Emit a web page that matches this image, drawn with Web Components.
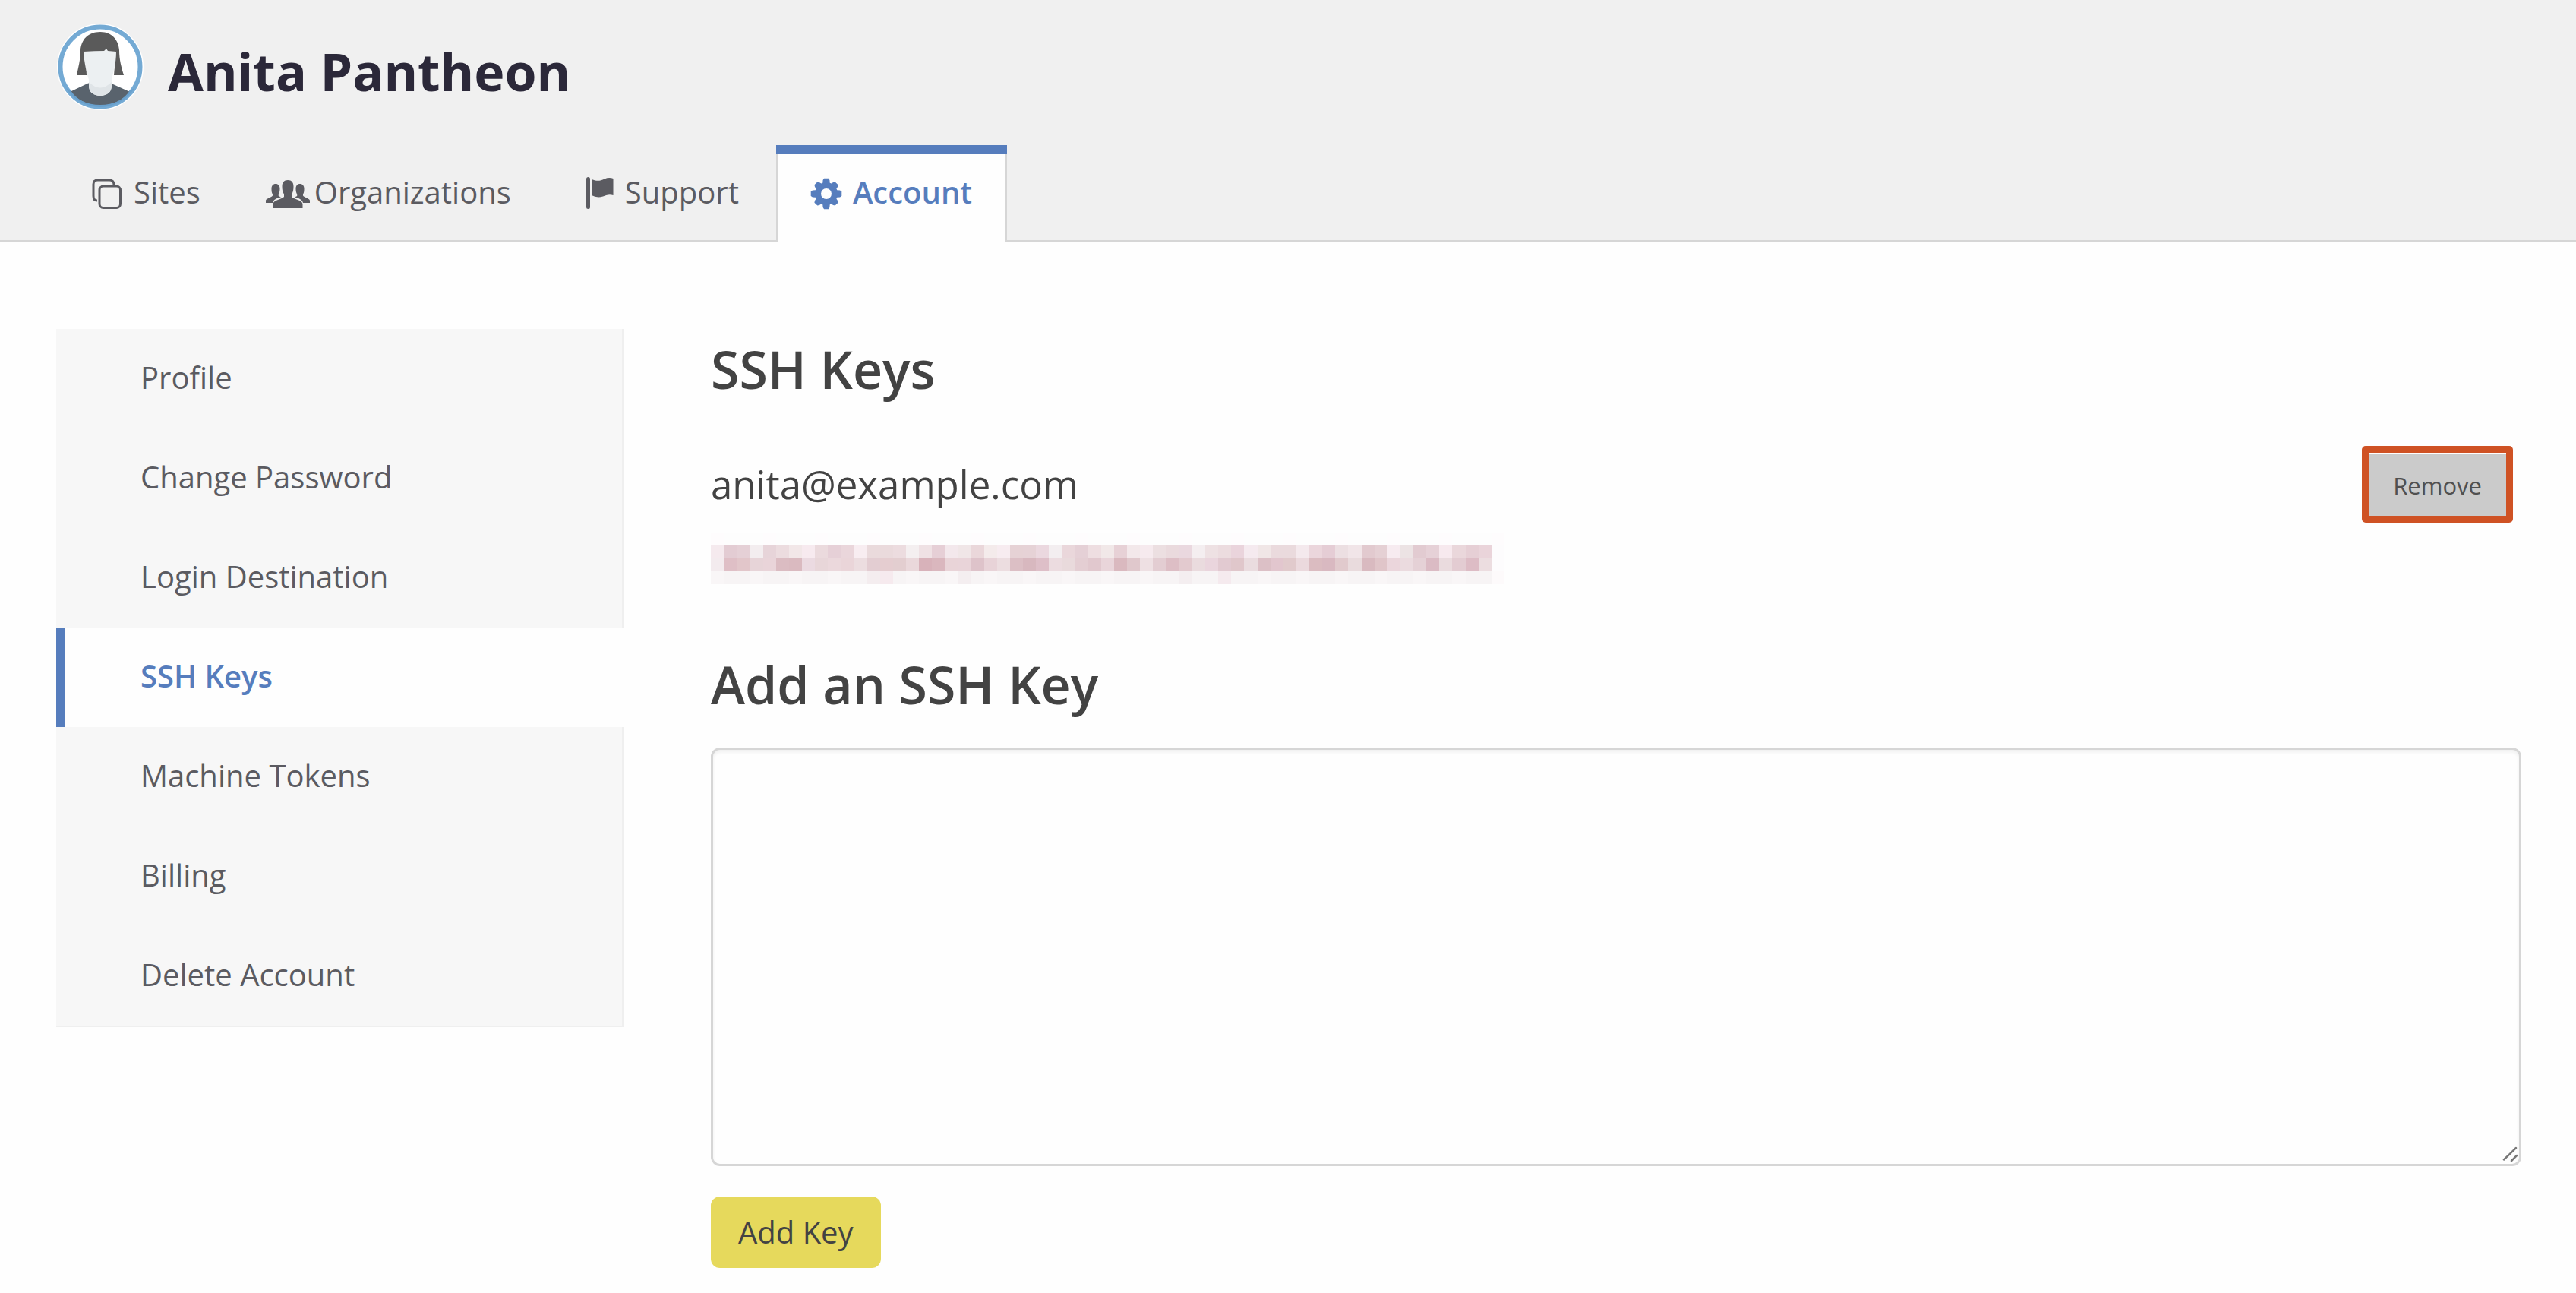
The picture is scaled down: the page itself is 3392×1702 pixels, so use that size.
<!DOCTYPE html>
<html lang="en">
<head>
<meta charset="utf-8">
<title>Account - SSH Keys</title>
<style>
  body { margin: 0; background: #fefefe; color: #434343; font-family: "Open Sans", "Noto Sans", sans-serif; }
</style>
</head>
<body>
<account-page></account-page>

<template id="t-account-page">
  <style>
    :host { display: block; }
    .columns { display: flex; align-items: flex-start; gap: 114px; padding: 114px 72px 32px 74px; }
    side-nav { flex: 0 0 748px; }
    main { flex: 1; min-width: 0; }
    h1 { margin: 0 0 48px; font-size: 68px; line-height: 106px; font-weight: 600; }
    add-key-form { margin-top: 79px; }
  </style>
  <account-header name="Anita Pantheon">
    <nav-tab icon="sites">Sites</nav-tab>
    <nav-tab icon="organizations">Organizations</nav-tab>
    <nav-tab icon="support">Support</nav-tab>
    <nav-tab icon="account" active>Account</nav-tab>
  </account-header>
  <div class="columns">
    <side-nav>
      <side-link>Profile</side-link>
      <side-link>Change Password</side-link>
      <side-link>Login Destination</side-link>
      <side-link active>SSH Keys</side-link>
      <side-link>Machine Tokens</side-link>
      <side-link>Billing</side-link>
      <side-link>Delete Account</side-link>
    </side-nav>
    <main>
      <h1>SSH Keys</h1>
      <ssh-key>anita@example.com</ssh-key>
      <add-key-form></add-key-form>
    </main>
  </div>
</template>

<template id="t-account-header">
  <style>
    :host { display: block; background: #f0f0f0; border-bottom: 3px solid #d6d6d6; padding: 31px 75px 0; }
    .user { display: flex; align-items: center; gap: 32px; }
    .name { padding-top: 12px; font-size: 68px; line-height: 92px; font-weight: 700; color: #2b2839; }
    nav { display: flex; gap: 3px; margin-top: 46px; margin-bottom: -3px; }
  </style>
  <header>
    <div class="user"><user-avatar></user-avatar><div class="name"></div></div>
    <nav aria-label="Dashboard"><slot></slot></nav>
  </header>
</template>

<template id="t-user-avatar">
  <style>:host { display: block; width: 114px; height: 114px; } svg { display: block; }</style>
  <svg width="114" height="114" viewBox="0 0 114 114" aria-hidden="true">
    <defs><clipPath id="disc"><circle cx="57" cy="57" r="51"/></clipPath></defs>
    <circle cx="57" cy="57" r="57" fill="#fff"/>
    <circle cx="57" cy="57" r="52.5" fill="#fff" stroke="#74aad4" stroke-width="6"/>
    <g clip-path="url(#disc)">
      <path d="M8 114V96Q12 92 19 89L38 80Q42 77 57 77T74 80L94 89Q104 93 106 96V114Z" fill="#59636d"/>
      <path d="M57 11C40 11 32 22 31 35C31 48 28 58 26 68L39 68L38 45H77L75 68H88C85 58 82 48 82 35C81 22 73 11 57 11Z" fill="#5a5a5a"/>
      <path d="M35 37Q50 36 62 36L65 33L67 36L78 37C78 53 74 64 72 74V82C72 90 66 95 57 95S42 90 42 82V74C39 64 36 53 35 37Z" fill="#ecf0f2"/>
      <path d="M42 77Q57 92 72 77V82C72 90 66 95 57 95S42 90 42 82Z" fill="#dfe4e7"/>
    </g>
    <path d="M12 85A53 53 0 0 0 102 85L96 88Q84 107 57 107T18 88Z" fill="#68a0cd"/>
  </svg>
</template>

<template id="t-nav-tab">
  <style>
    :host { display: block; color: #5b5b61; }
    a { display: flex; align-items: center; gap: 15px; padding: 12px 43px 17px; border: 3px solid transparent; border-width: 0 3px; color: inherit; text-decoration: none; font-size: 40px; line-height: 99px; }
    svg { display: none; width: 40px; height: 45px; overflow: visible; flex: none; }
    :host([icon="sites"]) .sites, :host([icon="organizations"]) .organizations,
    :host([icon="support"]) .support, :host([icon="account"]) .account { display: block; }
    :host([active]) { color: #567dbd; }
    :host([active]) a { background: linear-gradient(#567dbd 12px, #fefefe 12px) padding-box; border-color: #d6d6d6; border-image: linear-gradient(#567dbd 12px, #d6d6d6 12px) 0 3; font-weight: 600; }
  </style>
  <a href="#">
    <svg class="sites" viewBox="0 0 40 45" fill="none" stroke="currentColor" stroke-width="3" aria-hidden="true">
      <rect x="10" y="15" width="27.500" height="28.500" rx="5"/>
      <path d="M29 13Q29 7 23 7H7.500Q2 7 2 12.500V28Q2 34 7 34"/>
    </svg>
    <svg class="organizations" viewBox="0 0 40 45" fill="currentColor" aria-hidden="true">
      <path d="M4 12C7.500 12 9.500 14.500 9.500 18.500C9.500 21 9 24 7.800 25.500V28L11 29.500C5 31 1 32.500 0 37H-9V34C-9 31.500 -2 30 0 27.500V25.500C-1.300 24 -1.500 21 -1.500 18.500C-1.500 14.500 .500 12 4 12Z"/>
      <path d="M36 12C32.500 12 30.500 14.500 30.500 18.500C30.500 21 31 24 32.200 25.500V28L29 29.500C35 31 39 32.500 40 37H49V34C49 31.500 42 30 40 27.500V25.500C41.300 24 41.500 21 41.500 18.500C41.500 14.500 39.500 12 36 12Z"/>
      <path d="M20 7C25 7 27.500 10 27.500 15.500C27.500 19 27 23 25 25.500V29C27 32 39.500 33.500 39.500 38.500V44H.500V38.500C.500 33.500 13 32 15 29V25.500C13 23 12.500 19 12.500 15.500C12.500 10 15 7 20 7Z"/>
    </svg>
    <svg class="support" viewBox="0 0 40 45" fill="currentColor" aria-hidden="true">
      <rect x="4" y="3" width="5" height="42" rx="2.500"/>
      <path d="M11 6C19 9 22 8 28 5.500Q34 3 39.500 5V27C34 25 30 27 26 28.500Q18 31 11 27Z"/>
    </svg>
    <svg class="account" viewBox="0 0 40 45" fill="currentColor" aria-hidden="true">
      <path class="gear" fill-rule="evenodd"/>
    </svg>
    <span><slot></slot></span>
  </a>
</template>

<template id="t-side-nav">
  <style>:host { display: block; } nav { display: block; border-bottom: 2px solid #efefef; }</style>
  <nav aria-label="Account settings"><slot></slot></nav>
</template>

<template id="t-side-link">
  <style>
    :host { display: block; }
    a { display: block; padding: 0 0 4px 99px; border-left: 12px solid #f7f7f7; border-right: 3px solid #efefef; background: #f7f7f7; color: #5b5b61; font-size: 40px; line-height: 127px; text-decoration: none; }
    :host([active]) a { background: #fefefe; border-left-color: #567dbd; border-right-color: #fefefe; color: #567dbd; font-weight: 600; }
  </style>
  <a href="#"><slot></slot></a>
</template>

<template id="t-ssh-key">
  <style>
    :host { display: block; }
    .row { display: flex; align-items: center; justify-content: space-between; padding-right: 11px; margin-bottom: 13px; }
    .label { font-size: 51px; line-height: 101px; }
    button { box-sizing: border-box; height: 101px; padding: 3px 32px 0; border: 9px solid #cf5224; border-radius: 5px; background: #cbcbcb; box-shadow: inset 0 2px #fefefe; color: #505050; font-family: inherit; font-size: 31px; line-height: 44px; }
  </style>
  <div class="row"><span class="label"><slot></slot></span><button type="button">Remove</button></div>
  <redacted-print></redacted-print>
</template>

<template id="t-redacted-print">
  <style>:host { display: block; } svg { display: block; width: 1045px; max-width: 100%; height: 68px; }</style>
  <svg viewBox="0 0 61 4" preserveAspectRatio="none" shape-rendering="crispEdges" role="img" aria-label="Hidden fingerprint"></svg>
</template>

<template id="t-add-key-form">
  <style>
    :host { display: block; }
    h2 { margin: 0 0 30px; font-size: 68px; line-height: 106px; font-weight: 600; }
    .field { position: relative; }
    textarea { display: block; box-sizing: border-box; width: 100%; height: 551px; padding: 20px; border: 3px solid #d6d6d6; border-radius: 12px; background: #fefefe; box-shadow: inset 0 3px 4px #f0f0f0; color: inherit; font: inherit; font-size: 40px; resize: none; outline: 0; }
    .grip { position: absolute; right: 5px; bottom: 5px; }
    button { display: block; height: 94px; margin-top: 40px; padding: 0 36px; border: 0; border-radius: 12px; background: #e6d95c; color: #434343; font-family: inherit; font-size: 40px; line-height: 54px; }
  </style>
  <form>
    <h2><label for="key">Add an SSH Key</label></h2>
    <div class="field">
      <textarea id="key"></textarea>
      <svg class="grip" width="20" height="21" viewBox="0 0 20 21" stroke="#777" stroke-width="2.500" stroke-linecap="round" aria-hidden="true"><path d="M2 17.500 18 2M12 19 19 12"/></svg>
    </div>
    <button type="button">Add Key</button>
  </form>
</template>

<script>
  class Base extends HTMLElement {
    constructor() {
      super();
      const tpl = document.getElementById('t-' + this.localName);
      this.attachShadow({ mode: 'open' }).append(tpl.content.cloneNode(true));
    }
  }

  class AccountHeader extends Base {
    connectedCallback() {
      this.shadowRoot.querySelector('.name').textContent = this.getAttribute('name');
    }
  }

  class NavTab extends Base {
    connectedCallback() {
      // Eight-toothed cog with a round hole, centred on (20, 25).
      const pts = [];
      for (let i = 0; i < 8; i++) {
        const a = i * Math.PI / 4, tip = i % 2 ? 19.5 : 20.5;
        for (const [r, d] of [[15, -.32], [tip - 2, -.24], [tip, -.14], [tip, .14], [tip - 2, .24], [15, .32]])
          pts.push((20 + r * Math.sin(a + d)).toFixed(1) + ' ' + (25 - r * Math.cos(a + d)).toFixed(1));
      }
      this.shadowRoot.querySelector('.gear').setAttribute('d',
        'M' + pts.join('L') + 'ZM13 25a7 7 0 1 0 14 0a7 7 0 1 0 -14 0Z');
    }
  }

  class RedactedPrint extends Base {
    connectedCallback() {
      const upper = 'f5eaee e3ccd3 e5d0d6 f3edef e7d4d9 ecdcdf f2e7e8 f7eaef ebdadd e6d0d7 ead6db f8edf1 eadadc eadadc ecdcdf f4eff0 efe1e4 e6cfd6 f3e8ec f0e6e7 ead7da f4ebeb f7ecf0 e6d2d5 e6d2d6 ebd8df f3eef0 ead7db e5d0d6 eedee1 f1e8e8 e7d1d6 f3e8ea f6eaee ecdfe1 eadadd ead8df f4eef0 eee1e3 ecdcdf ead4dc f5eaef f0e6e6 eadadd eadadd f4e9ed ebd6dc e5cdd5 ecdfe2 f1e5e8 e2cacf e5d0d4 f7ebf0 ece3e4 e2cbd1 e6d1d7 f7e9ee ead7db e6cfd5 ead4da fdfcfd'.split(' ');
      const lower = 'f3ebee dfbfc6 e2c6ca e7d4d8 e9d4d9 dbbcc2 dabac0 ebdae1 e8d6d9 ebd8dc ead5d9 ecdde0 e3cdd2 e5cdd0 e3ced0 ead8db d8b2ba dab7be e9d4d8 e9d4d9 dec3ca e8d3d8 ecdde0 dcbfc5 d8b8bf debfc8 ecdce0 e9dadc e4ced3 e1c8ce e9d5da dab9bf e0c8cc eee0e3 e3cdd2 ddbec5 e3cacf eadbde ead5dd e2cad1 e0c7cb eadcdf dcc0c6 e2c6ce e1cacc ebd9dd dbbcc1 d9b9c1 e1cacd e9dbdd d9bac0 e0c5c9 ebd6dc ebdbdf e5d1d6 dbbbc4 eadbde e3ccd2 ddbcc5 ecdde0 fdfcfd'.split(' ');
      const faint = upper.map((_, i) => i === 60 ? 'fdfafb' : ({ 12: 'f4edef', 13: 'f6eaee', 19: 'f4eef0', 36: 'f4eef0', 39: 'f5eaee' })[i] || (i % 3 ? 'f7f4f5' : 'f9f6f7'));
      const top = upper.map((_, i) => i % 4 ? 'fdfdfd' : 'fefcfd');
      const svg = this.shadowRoot.querySelector('svg');
      [top, upper, lower, faint].forEach((row, y) => row.forEach((c, x) => {
        const r = document.createElementNS('http://www.w3.org/2000/svg', 'rect');
        for (const [k, v] of Object.entries({ x, y, width: 1, height: 1, fill: '#' + c })) r.setAttribute(k, v);
        svg.append(r);
      }));
    }
  }

  customElements.define('user-avatar', class extends Base {});
  customElements.define('nav-tab', NavTab);
  customElements.define('account-header', AccountHeader);
  customElements.define('side-link', class extends Base {});
  customElements.define('side-nav', class extends Base {});
  customElements.define('redacted-print', RedactedPrint);
  customElements.define('ssh-key', class extends Base {});
  customElements.define('add-key-form', class extends Base {});
  customElements.define('account-page', class extends Base {});
</script>
</body>
</html>
